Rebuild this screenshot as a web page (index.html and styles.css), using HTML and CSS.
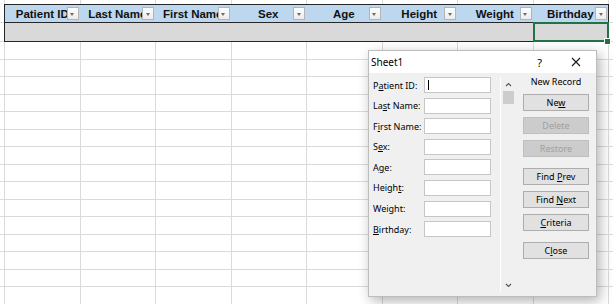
FILE: index.html
```html
<!DOCTYPE html>
<html lang="en">
<head>
    <meta charset="UTF-8">
    <meta name="viewport" content="width=device-width, initial-scale=1.0">
    <title>Patients - Sheet1</title>
    <link rel="stylesheet" href="styles.css">
</head>
<body>
    <!-- Feuille de calcul -->
    <div class="sheet">
        <div class="row row-top"><i></i><i></i><i></i><i></i><i></i><i></i><i></i><i></i><i></i><i></i></div>

        <div class="row row-head">
            <i></i>
            <div class="th"><span>Patient ID</span><b class="filter"></b></div>
            <div class="th"><span>Last Name</span><b class="filter"></b></div>
            <div class="th"><span>First Name</span><b class="filter"></b></div>
            <div class="th"><span>Sex</span><b class="filter"></b></div>
            <div class="th"><span>Age</span><b class="filter"></b></div>
            <div class="th"><span>Height</span><b class="filter"></b></div>
            <div class="th"><span>Weight</span><b class="filter"></b></div>
            <div class="th"><span>Birthday</span><b class="filter"></b></div>
            <i class="after"></i>
        </div>

        <div class="row row-data">
            <i></i>
            <div class="td"></div><div class="td"></div><div class="td"></div><div class="td"></div>
            <div class="td"></div><div class="td"></div><div class="td"></div>
            <div class="td selected"><b class="handle"></b></div>
            <i class="after"></i>
        </div>

        <div class="row"><i></i><i></i><i></i><i></i><i></i><i></i><i></i><i></i><i></i><i></i></div>
        <div class="row"><i></i><i></i><i></i><i></i><i></i><i></i><i></i><i></i><i></i><i></i></div>
        <div class="row"><i></i><i></i><i></i><i></i><i></i><i></i><i></i><i></i><i></i><i></i></div>
        <div class="row"><i></i><i></i><i></i><i></i><i></i><i></i><i></i><i></i><i></i><i></i></div>
        <div class="row"><i></i><i></i><i></i><i></i><i></i><i></i><i></i><i></i><i></i><i></i></div>
        <div class="row"><i></i><i></i><i></i><i></i><i></i><i></i><i></i><i></i><i></i><i></i></div>
        <div class="row"><i></i><i></i><i></i><i></i><i></i><i></i><i></i><i></i><i></i><i></i></div>
        <div class="row"><i></i><i></i><i></i><i></i><i></i><i></i><i></i><i></i><i></i><i></i></div>
        <div class="row"><i></i><i></i><i></i><i></i><i></i><i></i><i></i><i></i><i></i><i></i></div>
        <div class="row"><i></i><i></i><i></i><i></i><i></i><i></i><i></i><i></i><i></i><i></i></div>
        <div class="row"><i></i><i></i><i></i><i></i><i></i><i></i><i></i><i></i><i></i><i></i></div>
        <div class="row"><i></i><i></i><i></i><i></i><i></i><i></i><i></i><i></i><i></i><i></i></div>
        <div class="row"><i></i><i></i><i></i><i></i><i></i><i></i><i></i><i></i><i></i><i></i></div>
        <div class="row"><i></i><i></i><i></i><i></i><i></i><i></i><i></i><i></i><i></i><i></i></div>
        <div class="row"><i></i><i></i><i></i><i></i><i></i><i></i><i></i><i></i><i></i><i></i></div>
    </div>

    <!-- Formulaire de saisie (fenêtre au-dessus de la feuille) -->
    <div class="dialog">
        <div class="titlebar">
            <span class="title">Sheet1</span>
            <span class="help">?</span>
            <svg class="close" width="10" height="10" viewBox="0 0 10 10">
                <path d="M1 1 L9 9 M9 1 L1 9" stroke="#1a1a1a" stroke-width="1.1" fill="none"/>
            </svg>
        </div>

        <div class="dialog-body">
            <div class="form">
                <div class="field"><label>P<u>a</u>tient ID:</label><div class="input"><span class="caret"></span></div></div>
                <div class="field"><label>La<u>s</u>t Name:</label><div class="input"></div></div>
                <div class="field"><label>F<u>i</u>rst Name:</label><div class="input"></div></div>
                <div class="field"><label>S<u>e</u>x:</label><div class="input"></div></div>
                <div class="field"><label>A<u>g</u>e:</label><div class="input"></div></div>
                <div class="field"><label>Heigh<u>t</u>:</label><div class="input"></div></div>
                <div class="field"><label>Weight:</label><div class="input"></div></div>
                <div class="field"><label><u>B</u>irthday:</label><div class="input"></div></div>
            </div>

            <div class="scrollbar">
                <svg width="7" height="5" viewBox="0 0 7 5"><path d="M1 4 L3.5 1.5 L6 4" stroke="#555" stroke-width="1.1" fill="none"/></svg>
                <div class="thumb"></div>
                <div class="track"></div>
                <svg width="7" height="5" viewBox="0 0 7 5"><path d="M1 1 L3.5 3.5 L6 1" stroke="#555" stroke-width="1.1" fill="none"/></svg>
            </div>

            <div class="actions">
                <div class="caption">New Record</div>
                <div class="btn"><span>Ne<u>w</u></span></div>
                <div class="btn disabled"><span>Delete</span></div>
                <div class="btn disabled"><span>Restore</span></div>
                <div class="btn spaced"><span>Find <u>P</u>rev</span></div>
                <div class="btn"><span>Find <u>N</u>ext</span></div>
                <div class="btn"><span><u>C</u>riteria</span></div>
                <div class="btn spaced"><span>C<u>l</u>ose</span></div>
            </div>
        </div>
    </div>
</body>
</html>
```

FILE: styles.css
```css
:root {
  --grid: #dadada;
  --table-line: #262626;
  --head-bg: #bdd7ee;
  --row-bg: #d9d9d9;
  --excel-green: #217346;
}

body {
  margin: 0;
  width: 613px;
  height: 304px;
  overflow: hidden;
  position: relative;
  background: #fff;
  font-family: "Liberation Sans", Arial, sans-serif;
}

/* Grille de la feuille */
.row {
  display: grid;
  grid-template-columns: 4px repeat(8, 75.5px) 1fr;
  height: 17.5px;
}

.row i {
  box-sizing: border-box;
  border-left: 1px solid var(--grid);
  border-bottom: 1px solid var(--grid);
}

.row i:first-child {
  border-left: 0;
}

.row-top {
  height: 4px;
}

.row-top i {
  border-bottom: 0;
}

/* En-tête du tableau */
.row-head {
  height: 19px;
}

.th {
  position: relative;
  box-sizing: border-box;
  background: var(--head-bg);
  border-top: 1px solid var(--table-line);
  border-bottom: 1px solid var(--table-line);
  display: flex;
  align-items: center;
  justify-content: center;
  overflow: hidden;
  font-weight: bold;
  font-size: 11.5px;
  color: #111;
  white-space: nowrap;
}

.row-head .th:nth-child(2),
.row-data .td:nth-child(2) {
  border-left: 1px solid var(--table-line);
}

.row-head i.after,
.row-data i.after {
  border-left: 1px solid var(--table-line);
}

.filter {
  position: absolute;
  right: 1px;
  top: 2px;
  width: 12px;
  height: 13px;
  box-sizing: border-box;
  border: 1px solid #b4b4b4;
  background: linear-gradient(#fdfdfd, #ececec);
}

.filter::after {
  content: '';
  position: absolute;
  left: 2.5px;
  top: 5px;
  border-left: 2.5px solid transparent;
  border-right: 2.5px solid transparent;
  border-top: 3px solid #6b6b6b;
}

/* Ligne de données */
.row-data {
  height: 19px;
}

.td {
  position: relative;
  box-sizing: border-box;
  background: var(--row-bg);
  border-bottom: 1px solid var(--table-line);
}

.selected::before {
  content: '';
  position: absolute;
  left: 0;
  top: -1px;
  right: -1px;
  bottom: -1px;
  border: 2px solid var(--excel-green);
}

.handle {
  position: absolute;
  right: -3px;
  bottom: -4px;
  width: 5px;
  height: 5px;
  background: var(--excel-green);
  border: 1px solid #fff;
  z-index: 2;
}

/* Fenêtre du formulaire */
.dialog {
  position: absolute;
  left: 368px;
  top: 50px;
  width: 229px;
  height: 247px;
  box-sizing: border-box;
  background: #f0f0f0;
  border: 1px solid #bdbdbd;
  box-shadow: 3px 4px 12px rgba(0, 0, 0, 0.3);
  display: flex;
  flex-direction: column;
  font-family: "Noto Sans", "Open Sans", sans-serif;
  font-size: 9px;
  color: #000;
}

.titlebar {
  height: 22px;
  background: #fff;
  display: flex;
  align-items: center;
  padding-left: 2px;
}

.title {
  font-size: 10px;
  flex: 1;
}

.help {
  font-size: 11px;
  margin-right: 29px;
}

.close {
  margin-right: 15px;
}

.dialog-body {
  flex: 1;
  display: flex;
}

.form {
  width: 131px;
  padding: 4px 0 0 4px;
  box-sizing: border-box;
  display: flex;
  flex-direction: column;
  gap: 4.6px;
}

.field {
  display: flex;
  align-items: center;
  height: 16px;
}

.field label {
  width: 51px;
  white-space: nowrap;
}

.input {
  position: relative;
  width: 67px;
  height: 16px;
  box-sizing: border-box;
  background: #fff;
  border: 1px solid #c6c6c6;
}

.caret {
  position: absolute;
  left: 3px;
  top: 2px;
  width: 1px;
  height: 10px;
  background: #000;
}

.scrollbar {
  width: 13px;
  margin: 4px 0 4px;
  border-left: 1px solid #fff;
  display: flex;
  flex-direction: column;
  align-items: center;
}

.scrollbar svg {
  margin: 5px 0 4px 1px;
}

.thumb {
  width: 11px;
  height: 13px;
  background: #cdcdcd;
  margin-left: 1px;
}

.track {
  flex: 1;
}

.actions {
  width: 66px;
  margin-left: 9px;
  padding-top: 2px;
  display: flex;
  flex-direction: column;
}

.caption {
  height: 14px;
  line-height: 14px;
  text-align: center;
  margin-bottom: 5px;
}

.btn {
  height: 17px;
  box-sizing: border-box;
  margin-bottom: 6px;
  background: #e1e1e1;
  border: 1px solid #adadad;
  display: flex;
  align-items: center;
  justify-content: center;
}

.btn.disabled {
  background: #cccccc;
  border-color: #bfbfbf;
  color: #a0a0a0;
}

.btn.spaced {
  margin-top: 5px;
}

u {
  text-underline-offset: 1px;
}
```
